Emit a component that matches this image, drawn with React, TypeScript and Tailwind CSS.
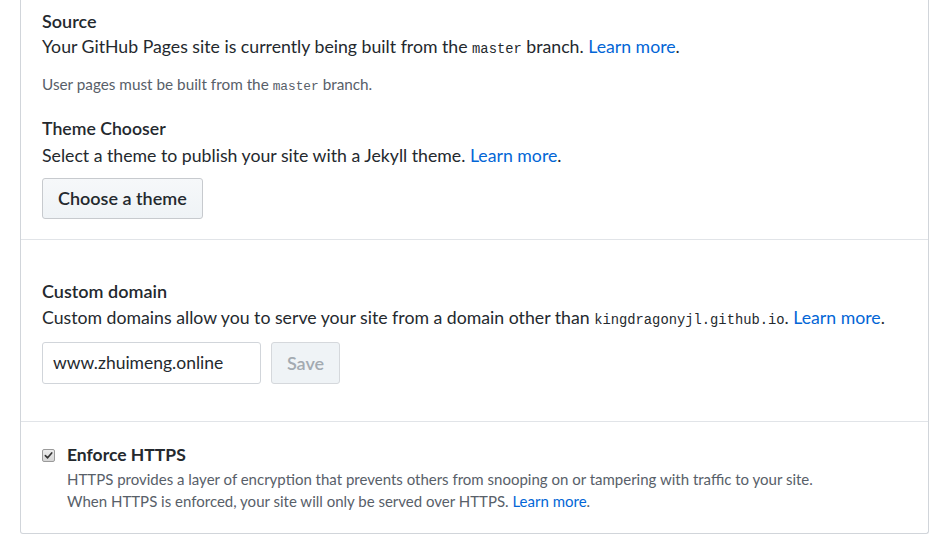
const sans = "font-['Lato','Open_Sans',sans-serif]"
const mono = "font-['Liberation_Mono','DejaVu_Sans_Mono',monospace] leading-none"

function LearnMore({ className = "" }: { className?: string }) {
  return <a className={`text-[#0366d6] ${className}`}>Learn more</a>
}

function CheckMark() {
  return (
    <div className="flex h-[13px] w-[13px] shrink-0 items-center justify-center rounded-[2px] border border-[#9a9a9a] bg-gradient-to-b from-[#ececec] to-[#d6d6d6]">
      <svg viewBox="0 0 10 10" className="h-[9px] w-[9px]">
        <path d="M1.5 5.2 L4 7.6 L8.6 2.2" fill="none" stroke="#333" strokeWidth="1.8" strokeLinecap="round" strokeLinejoin="round" />
      </svg>
    </div>
  )
}

export default function App() {
  return (
    <div className={`h-[560px] w-[935px] overflow-hidden bg-white pl-[20px] text-[#24292e] ${sans}`}>
      <div className="w-[909px] rounded-b-[3px] border-x border-b border-[#d1d5da]">
        <div className="px-[21px] pt-[9px] pb-[20px]">
          <h3 className="text-[18px] leading-[24px] font-semibold">Source</h3>
          <p className="mt-[2px] text-[17.7px] leading-[24px]">
            Your GitHub Pages site is currently being built from the <code className={`${mono} text-[13.8px]`}>master</code> branch. <LearnMore />.
          </p>
          <p className="mt-[15px] text-[15.3px] leading-[20px] text-[#586069]">
            User pages must be built from the <code className={`${mono} text-[12.8px]`}>master</code> branch.
          </p>
          <h3 className="mt-[23px] text-[17.7px] leading-[24px] font-semibold">Theme Chooser</h3>
          <p className="mt-[3px] text-[17.7px] leading-[24px]">
            Select a theme to publish your site with a Jekyll theme. <LearnMore />.
          </p>
          <button className="mt-[10px] h-[41px] rounded-[3px] border border-[#c7cace] bg-gradient-to-b from-[#f6f8fa] to-[#eff3f6] px-[15px] text-[18px] font-semibold">
            Choose a theme
          </button>
        </div>

        <div className="border-t border-[#e1e4e8] px-[21px] pt-[39px] pb-[37px]">
          <h3 className="text-[18px] leading-[24px] font-semibold">Custom domain</h3>
          <p className="mt-[3px] text-[17.7px] leading-[24px]">
            Custom domains allow you to serve your site from a domain other than <code className={`${mono} text-[13.8px]`}>kingdragonyjl.github.io</code>. <LearnMore />.
          </p>
          <div className="mt-[12px] flex gap-[10px]">
            <div className="flex h-[42px] w-[219px] items-center rounded-[3px] border border-[#d1d5da] px-[10px] text-[17.5px]">
              www.zhuimeng.online
            </div>
            <button className="h-[42px] w-[69px] rounded-[3px] border border-[#d5d8dc] bg-[#eff3f6] text-[18px] font-semibold text-[#a3aab1]">
              Save
            </button>
          </div>
        </div>

        <div className="border-t border-[#e1e4e8] px-[21px] pt-[21px] pb-[21px]">
          <div className="flex gap-[12px]">
            <div className="pt-[6px]">
              <CheckMark />
            </div>
            <div>
              <div className="text-[17.5px] leading-[24px] font-bold">Enforce HTTPS</div>
              <p className="mt-[1px] text-[15px] leading-[22px] text-[#586069]">
                HTTPS provides a layer of encryption that prevents others from snooping on or tampering with traffic to your site.
                <br />
                When HTTPS is enforced, your site will only be served over HTTPS. <LearnMore />.
              </p>
            </div>
          </div>
        </div>
      </div>
    </div>
  )
}
